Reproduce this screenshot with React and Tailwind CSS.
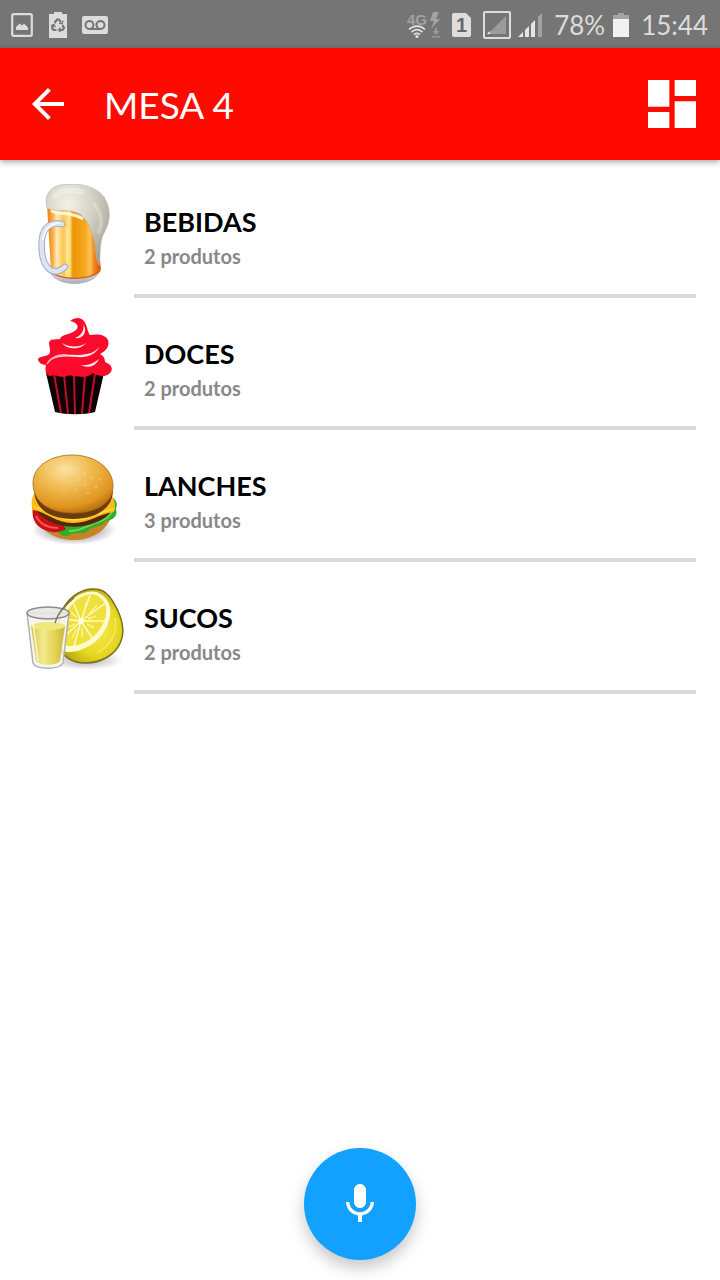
import { useState } from "react";

const BeerIcon = () => (
  <svg viewBox="0 0 100 100" className="w-full h-full" aria-hidden="true">
    <defs>
      <linearGradient id="beer" x1="0" x2="1">
        <stop offset="0" stopColor="#ee7d12" />
        <stop offset=".1" stopColor="#f8a93a" />
        <stop offset=".18" stopColor="#ffe9bd" />
        <stop offset=".3" stopColor="#fbc652" />
        <stop offset=".42" stopColor="#ffe48a" />
        <stop offset=".48" stopColor="#eb9608" />
        <stop offset=".7" stopColor="#f5a81c" />
        <stop offset=".8" stopColor="#ffc25a" />
        <stop offset=".88" stopColor="#ef8414" />
        <stop offset="1" stopColor="#d9520e" />
      </linearGradient>
      <radialGradient id="foam" cx=".35" cy=".25" r=".8">
        <stop offset="0" stopColor="#f3f2ea" />
        <stop offset=".5" stopColor="#d3d1c3" />
        <stop offset="1" stopColor="#a3a294" />
      </radialGradient>
      <linearGradient id="glassBase" x1="0" y1="0" x2="0" y2="1">
        <stop offset="0" stopColor="#f4f6fb" />
        <stop offset="1" stopColor="#a9adb8" />
      </linearGradient>
    </defs>
    <path d="M25 84C27 104 72 105 76 85Z" fill="url(#glassBase)" stroke="#a5a8b0" strokeWidth=".8" />
    <path d="M23 20L27 87C35 96 68 96 77 86L72 34Z" fill="url(#beer)" />
    <path d="M27 88C38 97 66 96 76 87" fill="none" stroke="#e05a10" strokeWidth="1.5" />
    <path d="M43 44V92" stroke="#fff0b5" strokeWidth="1.5" opacity=".8" />
    <path d="M38 40C26 38 19 44 18 55C17 65 18 77 24 84C29 89 35 88 41 83" fill="none" stroke="#a3abc0" strokeWidth="6.5" strokeLinecap="round" />
    <path d="M38 40C26 38 19 44 18 55C17 65 18 77 24 84C29 89 35 88 41 83" fill="none" stroke="#dee4f3" strokeWidth="4.5" strokeLinecap="round" />
    <path d="M36 39C27 39 20 46 19 56" fill="none" stroke="#fff" strokeWidth="1.5" />
    <path d="M23 24C20 13 24 4 36 1C51 -2 71 1 80 13C88 26 86 39 80 49C75 58 77 70 75 81C70 72 73 60 68 49C65 40 61 33 54 29C44 24 31 29 23 24Z" fill="url(#foam)" stroke="#b5b4a8" strokeWidth=".6" />
    <path d="M27 27C36 31 49 28 59 35" fill="none" stroke="#fff9e6" strokeWidth="3" opacity=".9" />
    <path d="M31 12C37 6 48 5 58 8" fill="none" stroke="#fff" strokeWidth="6" strokeLinecap="round" opacity=".3" />
    <path d="M70 20C77 29 79 39 75 48" fill="none" stroke="#eeede2" strokeWidth="4" strokeLinecap="round" opacity=".35" />
  </svg>
);

const CupcakeIcon = () => (
  <svg viewBox="0 0 100 100" className="w-full h-full" aria-hidden="true">
    <path d="M22 57L31 96C43 99 60 99 71 96L80 57Z" fill="#0c0205" />
    <path d="M30 58L37 97M40 59L44 98M50 59L51 98M61 59L58 98M71 58L65 97" stroke="#c40d2b" strokeWidth="2" />
    <path d="M46 5C51 1 57 1 60 5C64 11 63 15 66 19C73 18 81 18 84 24C86 30 82 35 76 38C80 40 81 43 81 46C87 48 90 53 86 57C81 62 74 60 69 57C61 65 49 58 43 60C36 63 31 57 27 60C21 60 21 53 22 49C18 49 14 46 14 43C16 40 20 41 24 39C28 37 25 31 25 27C26 22 31 24 36 23C37 18 47 19 52 14C56 10 52 6 46 5Z" fill="#fb0b2b" />
    <path d="M59 8C61 14 57 20 51 22C57 23 62 19 61 12ZM38 27C45 32 57 31 62 27C57 34 43 34 38 27ZM27 44C36 35 50 41 63 38C69 37 73 34 76 30C72 38 64 42 53 41C42 40 33 40 27 44ZM56 49C64 50 70 47 75 43C72 50 65 53 56 49Z" fill="#ffe7ea" />
    <path d="M23 48C27 41 35 38 43 39" fill="none" stroke="#ffb0bb" strokeWidth="1.5" />
  </svg>
);

const BurgerIcon = () => (
  <svg viewBox="0 0 100 100" className="w-full h-full" aria-hidden="true">
    <defs>
      <radialGradient id="bun" cx=".4" cy=".25" r=".8">
        <stop offset="0" stopColor="#fbe3a0" />
        <stop offset=".4" stopColor="#f0bb52" />
        <stop offset=".8" stopColor="#e0951f" />
        <stop offset="1" stopColor="#b0680d" />
      </radialGradient>
      <radialGradient id="burgerShadow">
        <stop offset=".4" stopColor="#555" stopOpacity=".55" />
        <stop offset="1" stopColor="#555" stopOpacity="0" />
      </radialGradient>
    </defs>
    <ellipse cx="50" cy="82" rx="42" ry="15" fill="url(#burgerShadow)" />
    <path d="M10 66C15 83 33 93 52 92C71 91 85 80 88 66Z" fill="#c98225" />
    <path d="M86 49C92 50 94 55 92 61C94 67 90 72 82 73C77 80 69 77 64 83C58 88 51 83 46 87C39 90 34 85 31 80L63 67Z" fill="#2cae31" />
    <path d="M45 83C55 84 62 78 74 74C82 72 87 67 89 61" fill="none" stroke="#73d34b" strokeWidth="2" />
    <path d="M9 58C7 70 11 78 21 82C28 85 36 85 42 81C36 71 22 68 9 58Z" fill="#cb1018" />
    <path d="M12 68C16 76 24 80 34 80" fill="none" stroke="#f3574d" strokeWidth="2" />
    <path d="M10 60C16 68 26 76 40 78C58 81 78 75 87 64Z" fill="#55280a" />
    <path d="M10 46C7 51 7 58 9 62C22 64 34 76 50 75C65 75 75 66 90 64C92 58 91 53 88 48C76 67 25 70 10 46Z" fill="#ffba13" />
    <path d="M10 59C25 62 34 72 50 72C63 72 75 64 90 61" fill="none" stroke="#ffdb4b" strokeWidth="1.5" />
    <path d="M10 40C10 62 27 71 49 71C71 71 89 61 89 42Z" fill="#6d3a0c" />
    <path d="M9 35C9 18 27 7 48 7C70 7 88 19 89 37C90 55 72 65 49 65C25 65 9 54 9 35Z" fill="url(#bun)" stroke="#a66b18" strokeWidth=".8" />
    <g fill="#ffe3a0" opacity=".5">
      <circle cx="44" cy="23" r="1" /><circle cx="53" cy="20" r="1" /><circle cx="61" cy="25" r="1" />
      <circle cx="68" cy="30" r="1" /><circle cx="54" cy="32" r="1" /><circle cx="46" cy="35" r="1" />
      <circle cx="61" cy="37" r="1" /><circle cx="72" cy="39" r="1" /><circle cx="52" cy="42" r="1" />
      <circle cx="64" cy="45" r="1" /><circle cx="40" cy="43" r="1" /><circle cx="76" cy="31" r="1" />
    </g>
  </svg>
);

const LemonIcon = () => (
  <svg viewBox="0 0 100 100" className="w-full h-full" aria-hidden="true">
    <defs>
      <radialGradient id="peel" cx=".6" cy=".55" r=".6">
        <stop offset="0" stopColor="#f9ed53" />
        <stop offset=".6" stopColor="#e6d51f" />
        <stop offset="1" stopColor="#b3a20c" />
      </radialGradient>
      <linearGradient id="juice" x1="0" x2="1">
        <stop offset="0" stopColor="#d8c644" />
        <stop offset=".35" stopColor="#f4e98f" />
        <stop offset=".65" stopColor="#e7d75b" />
        <stop offset="1" stopColor="#cbb83a" />
      </linearGradient>
      <radialGradient id="lemonShadow">
        <stop offset=".2" stopColor="#777" stopOpacity=".5" />
        <stop offset="1" stopColor="#777" stopOpacity="0" />
      </radialGradient>
    </defs>
    <ellipse cx="61" cy="80" rx="38" ry="10" fill="url(#lemonShadow)" />
    <path d="M40 27C47 15 60 8 71 9C84 9 90 23 94 31C98 40 101 51 97 61C92 75 77 83 61 83C49 83 39 77 36 68C32 57 33 40 40 27Z" fill="url(#peel)" stroke="#777020" strokeWidth="1.5" />
    <path d="M39 32C46 17 61 9 73 12C88 19 89 33 83 46C76 62 59 73 42 72C34 64 34 44 39 32Z" fill="#fffbd1" />
    <path d="M42 33C49 20 62 12 72 15C84 21 84 33 79 44C72 58 58 67 43 66C38 58 37 44 42 33Z" fill="#f0e03c" />
    <path d="M57 41L66 15M57 41L80 24M57 41L81 41M57 41L68 58M57 41L50 66M57 41L39 58M57 41L39 39M57 41L49 22" stroke="#fffbc9" strokeWidth="1.5" />
    <circle cx="57" cy="41" r="3" fill="#fffde0" />
    <path d="M62 22L60 33M73 25L65 34M72 36L64 39M70 48L63 44M58 57L58 47M48 58L53 48M45 47L51 44M47 32L53 38" stroke="#fff48e" strokeWidth="1.5" />
    <path d="M91 38C94 52 87 65 73 73" fill="none" stroke="#fff37a" strokeWidth="2" opacity=".5" />
    <path d="M3 33L9 83C12 90 35 90 39 83L45 33Z" fill="#f4f5ef" fillOpacity=".9" stroke="#b1b2ac" strokeWidth="1.5" />
    <path d="M7 46L12 81C17 86 32 86 36 81L41 46Z" fill="url(#juice)" />
    <ellipse cx="24" cy="46" rx="17" ry="4" fill="#f1e87b" />
    <ellipse cx="24" cy="33" rx="21" ry="6" fill="#e7e7e4" fillOpacity=".9" stroke="#8d8e88" strokeWidth="1.5" />
    <path d="M31 43C34 32 42 24 50 18" fill="none" stroke="#767658" strokeWidth="1.5" />
    <path d="M9 42L14 81" stroke="#fff" strokeWidth="1.5" opacity=".8" />
  </svg>
);

const categories = [
  { name: "BEBIDAS", count: 2, Icon: BeerIcon },
  { name: "DOCES", count: 2, Icon: CupcakeIcon },
  { name: "LANCHES", count: 3, Icon: BurgerIcon },
  { name: "SUCOS", count: 2, Icon: LemonIcon },
];

function StatusBar() {
  return (
    <div className="h-12 pl-2.5 pr-3 pt-0.5 flex items-center justify-between bg-[#757575] text-[#dcdcdc]">
      <div className="flex items-center gap-3.5">
        <svg width="24" height="26" viewBox="0 0 24 26" aria-hidden="true">
          <rect x="2.2" y="2.2" width="19.6" height="21.6" rx="1.5" fill="none" stroke="currentColor" strokeWidth="2.2" />
          <path d="M6 18V15L9.5 11.5L12 13.5L14 11.5L18 15.5V18Z" fill="currentColor" />
        </svg>
        <svg width="20" height="28" viewBox="0 0 20 28" aria-hidden="true">
          <path d="M1 3H6V1H14V3H19V27H1Z" fill="currentColor" />
          <g fill="none" stroke="#757575" strokeWidth="2.2">
            <path d="M6.5 12L9 8.5H11L13 11.5M14.5 14L16 17L14.5 19H11M8.5 19H5.5L4 17L5.5 14" />
            <path d="M11 12.5L14.2 12.7L15 9.5M12.5 16.5L10.5 19L12.5 21M3 14.5L6 13.5L7.5 16.2" strokeWidth="1.2" />
          </g>
        </svg>
        <svg width="26" height="20" viewBox="0 0 26 20" aria-hidden="true">
          <rect y="1" width="26" height="18" rx="2" fill="currentColor" />
          <g fill="none" stroke="#757575" strokeWidth="2">
            <circle cx="7.5" cy="10" r="4" />
            <circle cx="18.5" cy="10" r="4" />
            <path d="M7.5 14H18.5" />
          </g>
        </svg>
      </div>

      <div className="flex items-center">
        <svg width="36" height="28" viewBox="0 0 36 28" className="mr-2.5" aria-hidden="true">
          <text x="1" y="14" fontSize="15" fontWeight="700" fill="#a2a2a2" className="font-['Liberation_Sans']">4G</text>
          <path d="M3 18.5C7.5 14 14.5 14 19 18.5M5.5 21.2C9 18 13 18 16.5 21.2M8 23.7C10 22 12 22 14 23.7" fill="none" stroke="#e2e2e2" strokeWidth="1.6" />
          <circle cx="11" cy="25.5" r="1.5" fill="#e2e2e2" />
          <path d="M27 1H33L30 8H34L25 18L28 10H24Z" fill="#a2a2a2" />
          <path d="M29 17H31V20H33.5L30 24L26.500 20H29ZM26 25H34V26.500H26Z" fill="#999" />
        </svg>
        <svg width="20" height="26" viewBox="0 0 20 26" className="mr-2.5" aria-hidden="true">
          <path d="M2 1H14L19 6V23Q19 25 17 25H2Q0 25 0 23V3Q0 1 2 1Z" fill="#dedede" />
          <text x="9.5" y="20" textAnchor="middle" fontSize="20" fontWeight="700" fill="#686868" className="font-['Liberation_Sans']">1</text>
        </svg>
        <svg width="30" height="30" viewBox="0 0 30 30" className="mr-1.5" aria-hidden="true">
          <rect x="2" y="2" width="26" height="26" rx="1" fill="none" stroke="#dedede" strokeWidth="2" />
          <path d="M6 24L24 6V24Z" fill="#9c9c9c" />
          <path d="M5 24L8 21V24Z" fill="#eee" />
        </svg>
        <svg width="26" height="26" viewBox="0 0 26 26" className="mr-2.5" aria-hidden="true">
          <path d="M0 25L5 20V25ZM7 18L11 14V25H7ZM13 12L17 8V25H13Z" fill="#e5e5e5" />
          <path d="M20 5L24 1V25H20Z" fill="#a2a2a2" />
        </svg>
        <span className="text-[26px] leading-8">78%</span>
        <svg width="16" height="26" viewBox="0 0 16 26" className="ml-2 mr-3" aria-hidden="true">
          <path d="M0 3H5V1H11V3H16V8H0Z" fill="#a4a4a4" />
          <path d="M0 7H16V25H0Z" fill="#f1f1f1" />
        </svg>
        <span className="text-[26px] leading-8">15:44</span>
      </div>
    </div>
  );
}

export default function App() {
  const [selected, setSelected] = useState(null);

  return (
    <div className="min-h-screen bg-white font-['Lato',sans-serif]">
      <StatusBar />

      {/* Toolbar */}
      <header className="h-28 pl-6 pr-4 flex items-center bg-[#ff0a00] text-white shadow-[0_2px_6px_rgba(0,0,0,0.35)]">
        <button aria-label="Voltar">
          <svg viewBox="0 0 24 24" className="w-12 h-12" fill="currentColor">
            <path d="M20 11H7.83l5.59-5.59L12 4l-8 8 8 8 1.41-1.41L7.83 13H20v-2z" />
          </svg>
        </button>
        <h1 className="ml-8 pt-0.5 flex-1 text-[37px] leading-12">MESA 4</h1>
        <button aria-label="Mesas">
          <svg viewBox="0 0 24 24" className="w-16 h-16" fill="currentColor">
            <path d="M3 13h8V3H3v10zm0 8h8v-6H3v6zm10 0h8V11h-8v10zm0-18v6h8V3h-8z" />
          </svg>
        </button>
      </header>

      {/* Categories */}
      <main className="pt-6 px-6">
        <ul className="space-y-[18px]">
          {categories.map(({ name, count, Icon }) => (
            <li key={name}>
              <button onClick={() => setSelected(name)} aria-pressed={selected === name}
                className="w-full flex gap-2.5 text-left">
                <span className="w-25 h-25 shrink-0"><Icon /></span>
                <span className="flex-1 flex flex-col pl-2.5 pt-5 pb-3 border-b-4 border-[#d9d9d9]">
                  <span className="text-[27px] leading-9 font-bold text-black">{name}</span>
                  <span className="h-[42px] text-xl leading-8 font-bold text-[#888]">{count} produtos</span>
                </span>
              </button>
            </li>
          ))}
        </ul>
      </main>

      <button aria-label="Falar"
        className="fixed bottom-5 left-1/2 -translate-x-1/2 w-28 h-28 rounded-full flex items-center justify-center bg-[#12a1ff] text-white shadow-[0_8px_16px_rgba(0,0,0,0.22)]">
        <svg viewBox="0 0 24 24" className="w-12 h-12" fill="currentColor">
          <path d="M12 14c1.66 0 3-1.34 3-3V5c0-1.66-1.34-3-3-3S9 3.34 9 5v6c0 1.66 1.34 3 3 3z" />
          <path d="M17.3 11c0 3-2.54 5.1-5.3 5.1S6.7 14 6.7 11H5c0 3.41 2.72 6.23 6 6.72V21h2v-3.28c3.28-.48 6-3.3 6-6.72h-1.7z" />
        </svg>
      </button>
    </div>
  );
}
